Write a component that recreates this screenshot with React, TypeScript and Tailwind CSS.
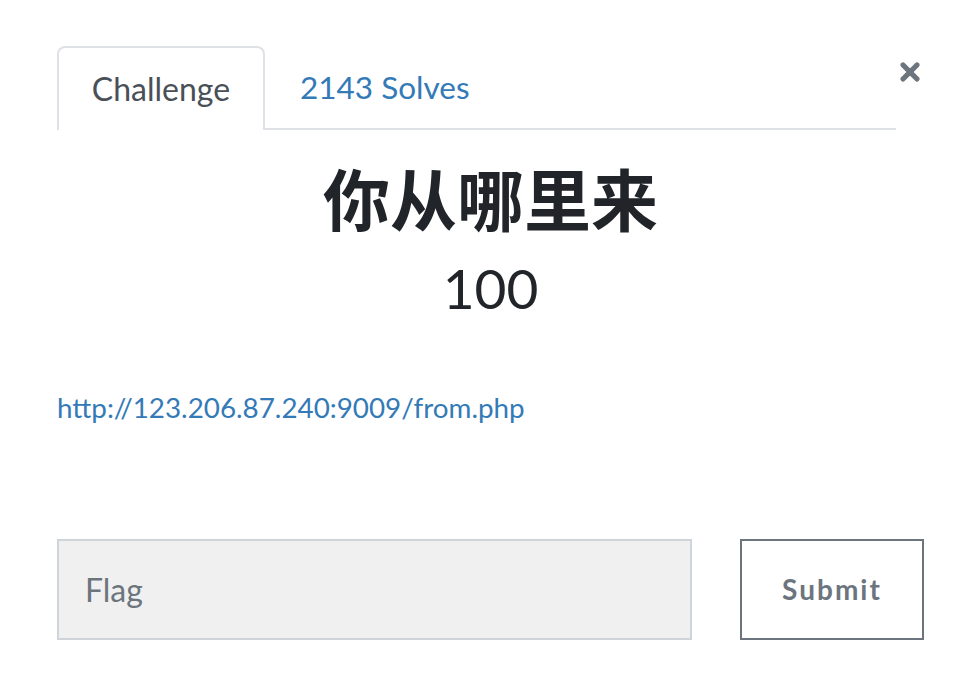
import { X } from 'lucide-react';

const App = () => {
  return (
    <div className="min-h-screen w-[980px] h-[688px] bg-white font-['Lato','Noto_Sans_CJK_SC',sans-serif]">
      <div className="ml-[57px] w-[867px] pt-[46px]">
        {/* Tabs */}
        <div className="flex items-start">
          <div className="flex w-[840px] border-b-2 border-[#dee2e6]">
            <div className="-mb-[2px] flex h-[84px] w-[208px] items-center justify-center rounded-t-[8px] border-2 border-b-0 border-[#dee2e6] bg-white text-[32px] text-[#495057]">
              Challenge
            </div>
            <div className="-mb-[2px] flex h-[84px] items-center pl-[35px] text-[31.5px] text-[#337ab7]">2143 Solves</div>
          </div>
          <button className="ml-auto mt-[12px] flex h-[28px] w-[28px] items-center justify-center text-[#6c757d]">
            <X className="h-[30px] w-[30px]" strokeWidth={4.5} />
          </button>
        </div>

        {/* Title */}
        <div className="mt-[30px] text-center">
          <h1 className="text-[67px] font-bold leading-[80px] text-[#212529]">你从哪里来</h1>
          <div className="mt-[13px] text-[55px] leading-[70px] text-[#212529]">100</div>
        </div>

        {/* Description */}
        <div className="mt-[64px]">
          <a className="text-[27.8px] text-[#337ab7]" href="#">http://123.206.87.240:9009/from.php</a>
        </div>

        {/* Flag form */}
        <div className="mt-[110px] flex items-center">
          <input
            className="h-[101px] w-[635px] border-2 border-[#ced4da] bg-[#f0f0f0] px-[26px] text-[32px] text-[#495057] placeholder:text-[#6c757d] outline-none"
            placeholder="Flag"
          />
          <button className="ml-auto h-[101px] w-[184px] border-2 border-[#6c757d] bg-white text-[28px] font-bold tracking-[2px] text-[#6c757d]">
            Submit
          </button>
        </div>
      </div>
    </div>
  );
};

export default App;
